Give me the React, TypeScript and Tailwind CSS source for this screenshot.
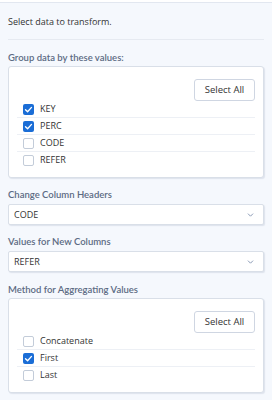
import { useState } from "react";

const groupOptions = ["KEY", "PERC", "CODE", "REFER"];
const methodOptions = ["Concatenate", "First", "Last"];

function Checkbox({ checked }: { checked: boolean }) {
  return checked ? (
    <span className="flex h-[11px] w-[11px] items-center justify-center rounded-[2px] bg-[#1a6dd6]">
      <svg viewBox="0 0 12 12" className="h-[9px] w-[9px]" fill="none">
        <path d="M2 6.2 L4.8 9 L10 3.2" stroke="white" strokeWidth="1.8" strokeLinecap="round" strokeLinejoin="round" />
      </svg>
    </span>
  ) : (
    <span className="block h-[11px] w-[11px] rounded-[2px] border border-[#c3ccd9] bg-white" />
  );
}

function CheckList({ options, initial }: { options: string[]; initial: string[] }) {
  const [sel, setSel] = useState<string[]>(initial);
  const toggle = (o: string) =>
    setSel((s) => (s.includes(o) ? s.filter((x) => x !== o) : [...s, o]));

  return (
    <div className="rounded-[3px] border border-[#d9dfe8] bg-white pt-[12px] pb-[9px] shadow-[1px_1px_1px_rgba(180,190,210,0.35)]">
      <div className="flex justify-end pr-[8px]">
        <button
          className="h-[22px] w-[61px] rounded-[3px] border border-[#cfd6e2] bg-white text-[9.5px] text-[#333]"
          onClick={() => setSel(options)}
        >
          Select All
        </button>
      </div>
      <div className="mx-[8px] divide-y divide-[#edf0f5]">
        {options.map((o) => (
          <div key={o} className="cursor-pointer" onClick={() => toggle(o)}>
            <div className="flex h-[16px] items-center gap-[6px] pl-[6px] text-[9px] text-[#333]">
              <Checkbox checked={sel.includes(o)} />
              <span>{o}</span>
            </div>
          </div>
        ))}
      </div>
    </div>
  );
}

function Dropdown({ value }: { value: string }) {
  return (
    <div className="flex h-[21px] items-center justify-between rounded-[2px] border border-[#d9dfe8] bg-white pl-[5px] pr-[9px] text-[9px] text-[#333] shadow-[1px_1px_1px_rgba(180,190,210,0.35)]">
      <span>{value}</span>
      <svg viewBox="0 0 8 5" className="h-[4px] w-[7px]" fill="none">
        <path d="M0.8 0.8 L4 4 L7.2 0.8" stroke="#8797b3" strokeWidth="1.2" />
      </svg>
    </div>
  );
}

function Label({ children }: { children: string }) {
  return (
    <div className="h-[16px] font-['Lato',sans-serif] text-[9.5px] font-semibold leading-[16px] text-[#5c6b83]">
      {children}
    </div>
  );
}

export default function App() {
  return (
    <div
      className="h-[400px] w-[272px] overflow-hidden bg-white"
      style={{ fontFamily: '"Open Sans", "Noto Sans", sans-serif' }}
    >
      <div className="mt-[2px] h-[398px] border-t border-[#e2e7f0] bg-[#f5f8fd] px-[8px]">
        <div className="border-b border-[#e6eaf1] pt-[11px] pb-[9px]">
          <div className="h-[16px] text-[9px] leading-[16px] text-[#333]">
            Select data to transform.
          </div>
        </div>

        <div className="mt-[10px]">
          <Label>Group data by these values:</Label>
          <CheckList options={groupOptions} initial={["KEY", "PERC"]} />
        </div>

        <div className="mt-[9px]">
          <Label>Change Column Headers</Label>
          <div className="mt-[1px]">
            <Dropdown value="CODE" />
          </div>
        </div>

        <div className="mt-[9px]">
          <Label>Values for New Columns</Label>
          <div className="mt-[1px]">
            <Dropdown value="REFER" />
          </div>
        </div>

        <div className="mt-[10px]">
          <Label>Method for Aggregating Values</Label>
          <CheckList options={methodOptions} initial={["First"]} />
        </div>
      </div>
    </div>
  );
}
